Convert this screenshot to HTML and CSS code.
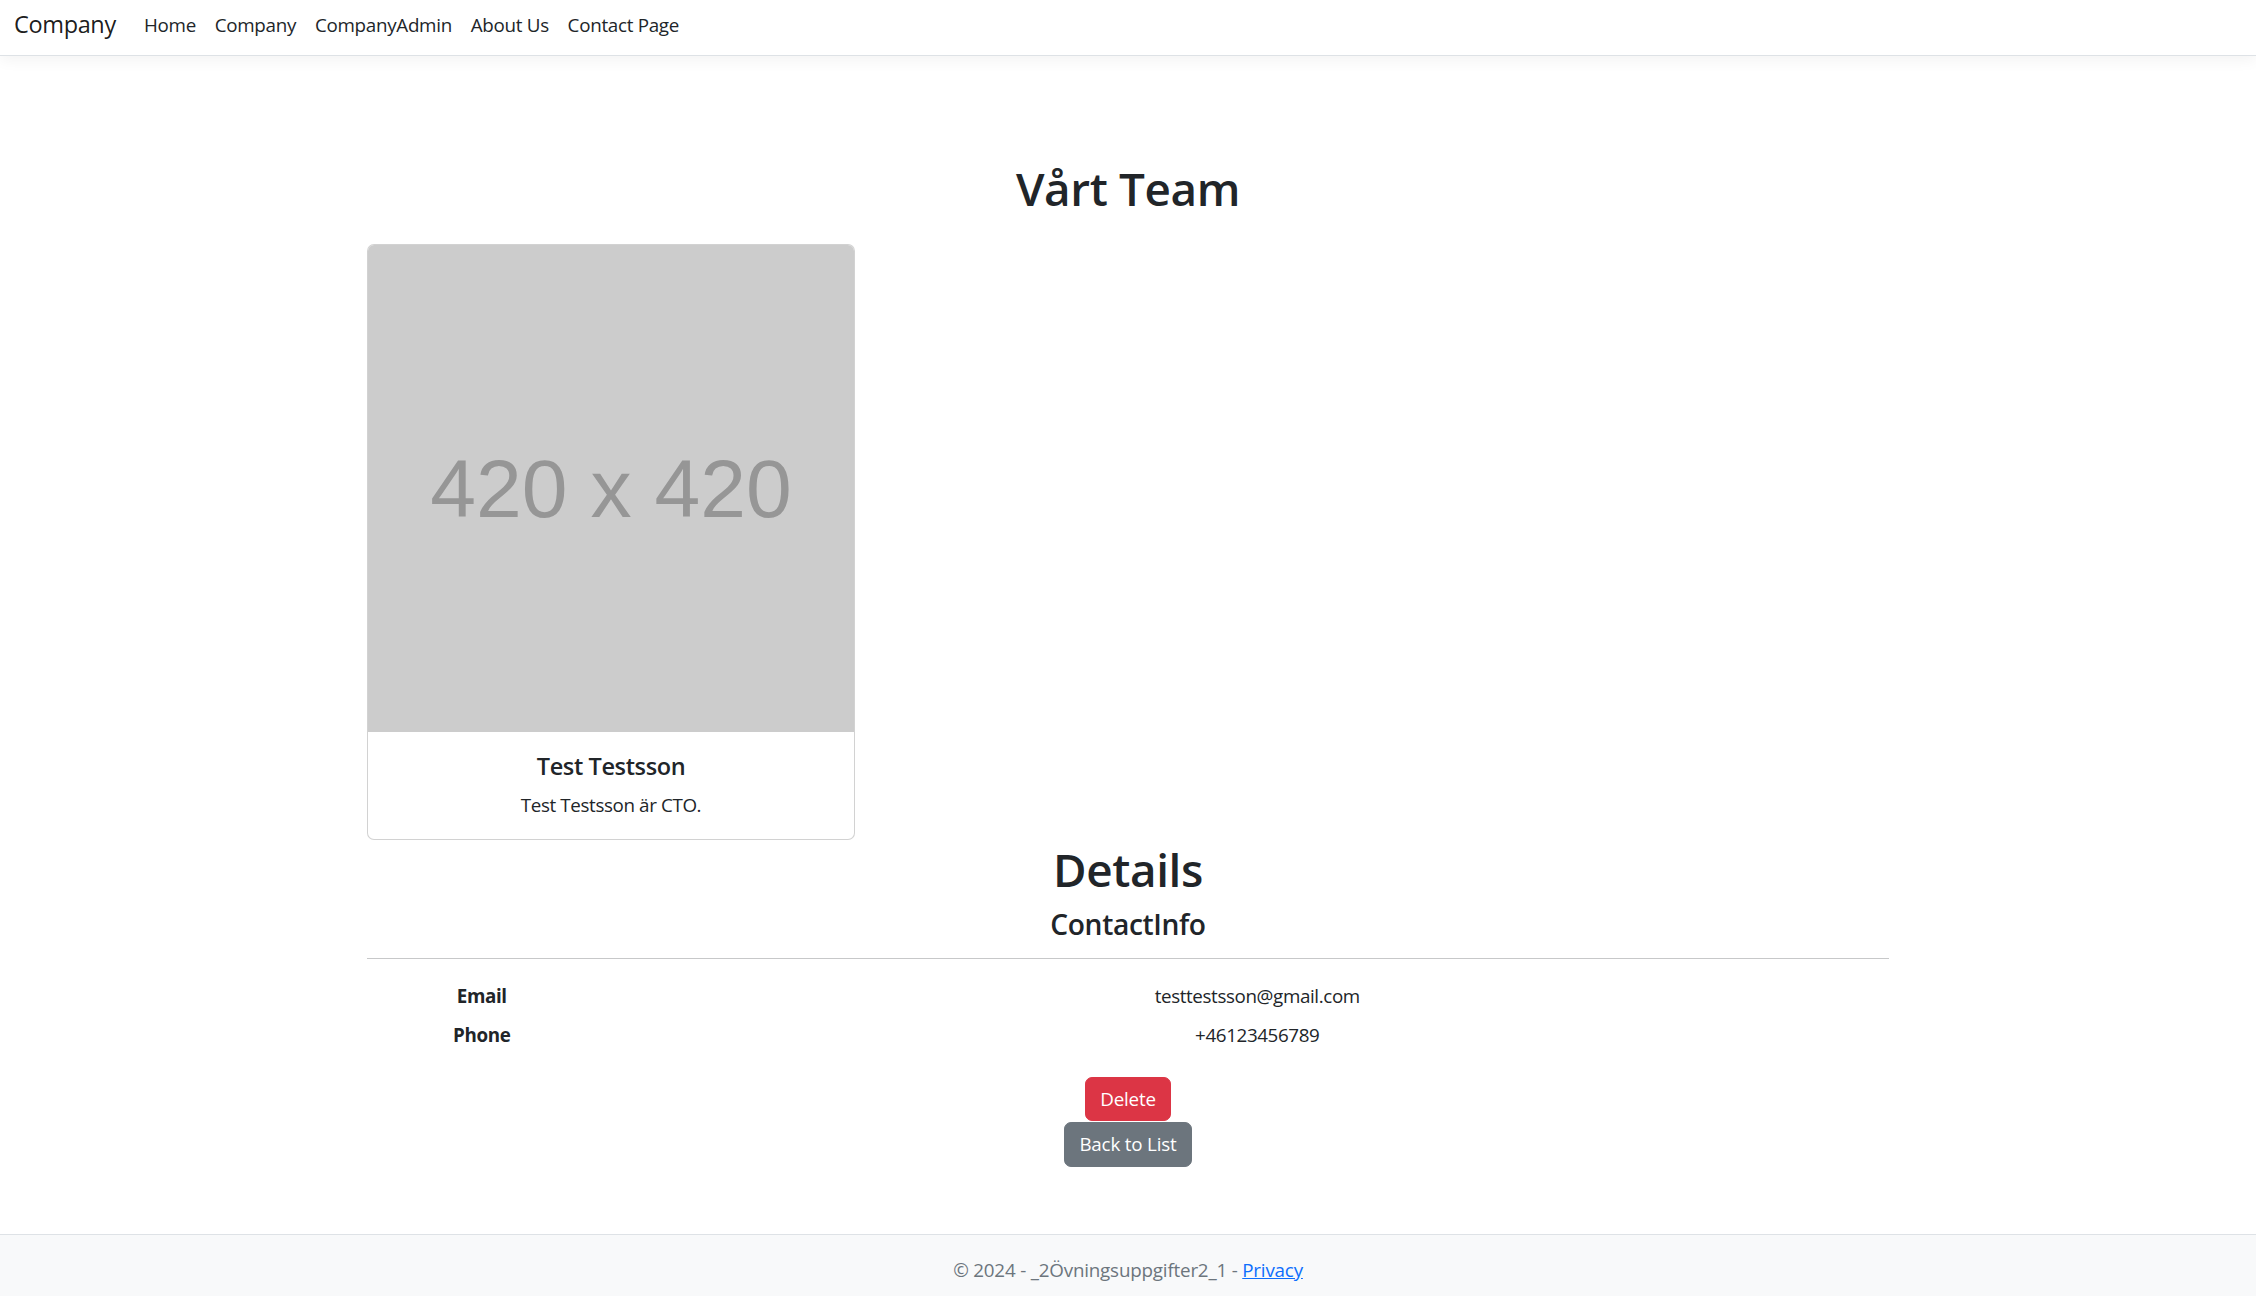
FILE: index.html
```html
<!DOCTYPE html>
<html lang="sv">
<head>
<meta charset="utf-8">
<title>Details - Company</title>
<link rel="stylesheet" href="styles.css">
</head>
<body>
<header>
  <nav class="navbar">
    <div class="navbar-inner">
      <a class="brand" href="#">Company</a>
      <ul class="nav-list">
        <li><a class="nav-link" href="#">Home</a></li>
        <li><a class="nav-link" href="#">Company</a></li>
        <li><a class="nav-link" href="#">CompanyAdmin</a></li>
        <li><a class="nav-link" href="#">About Us</a></li>
        <li><a class="nav-link" href="#">Contact Page</a></li>
      </ul>
    </div>
  </nav>
</header>
<main class="page">
  <h1 class="team-title">Vårt Team</h1>
  <div class="team-grid">
    <div class="member-card">
      <div class="placeholder"><span>420 x 420</span></div>
      <div class="card-body">
        <h5 class="card-title">Test Testsson</h5>
        <p class="card-text">Test Testsson är CTO.</p>
      </div>
    </div>
  </div>
  <h1 class="details-title">Details</h1>
  <h4 class="contact-title">ContactInfo</h4>
  <hr class="divider">
  <dl class="info">
    <dt>Email</dt>
    <dd>testtestsson@gmail.com</dd>
    <dt>Phone</dt>
    <dd>+46123456789</dd>
  </dl>
  <div class="actions">
    <button class="btn btn-danger" type="button">Delete</button>
    <a class="btn btn-secondary" href="#">Back to List</a>
  </div>
</main>
<footer class="footer">
  <div class="footer-inner">© 2024 - _2Övningsuppgifter2_1 - <a href="#">Privacy</a></div>
</footer>
</body>
</html>
```

FILE: styles.css
```css
html {
  zoom: 1.175;
}

* {
  box-sizing: border-box;
}

body {
  margin: 0;
  font-family: "Open Sans", "Noto Sans", "Liberation Sans", sans-serif;
  font-size: 16px;
  line-height: 1.5;
  letter-spacing: -0.02em;
  color: #212529;
  background: #fff;
  overflow: hidden;
}

a {
  text-decoration: none;
}

/* Navbar */
.navbar {
  height: 48px;
  border-bottom: 1px solid #dee2e6;
  background: #fff;
  box-shadow: 0 4px 12px rgba(0, 0, 0, 0.05);
}

.navbar-inner {
  height: 100%;
  display: flex;
  align-items: center;
  padding: 0 12px 5px;
}

.brand {
  font-size: 20px;
  color: rgba(0, 0, 0, 0.9);
  margin-right: 16px;
  line-height: 30px;
}

.nav-list {
  display: flex;
  list-style: none;
  margin: 0;
  padding: 0;
}

.nav-link {
  display: block;
  padding: 0 8px;
  color: #212529;
  line-height: 24px;
  letter-spacing: -0.015em;
}

/* Main */
.page {
  max-width: 1320px;
  margin: 0 auto;
  padding: 88px 12px 0;
  text-align: center;
}

.team-title,
.details-title {
  font-size: 39px;
  font-weight: 600;
  line-height: 48px;
  margin: 0 0 24px;
}

.details-title {
  margin: 1px 0 9px;
}

.team-grid {
  display: grid;
  grid-template-columns: repeat(3, 1fr);
  gap: 24px;
  text-align: left;
}

.member-card {
  border: 1px solid rgba(0, 0, 0, 0.175);
  border-radius: 6px;
  background: #fff;
  overflow: hidden;
}

.placeholder {
  aspect-ratio: 1 / 1;
  background: #cccccc;
  display: flex;
  align-items: center;
  justify-content: center;
}

.placeholder span {
  font-family: "Liberation Sans", Arial, sans-serif;
  font-size: 70px;
  letter-spacing: 0;
  color: #969696;
  line-height: 1;
}

.card-body {
  padding: 17px 16px 17px;
  text-align: center;
}

.card-title {
  font-size: 20px;
  font-weight: 600;
  line-height: 1.2;
  margin: 0 0 9px;
}

.card-text {
  margin: 0;
}

.contact-title {
  font-size: 24px;
  font-weight: 600;
  line-height: 1.2;
  margin: 0;
}

.divider {
  margin: 14px 0 19px;
  border: 0;
  border-top: 1px solid #212529;
  opacity: 0.25;
}

/* Definition list */
.info {
  display: grid;
  grid-template-columns: 220px 1fr;
  margin: 0 -12px;
}

.info dt {
  font-weight: 700;
  padding: 0 12px;
}

.info dd {
  margin: 0 0 9px;
  padding: 0 12px;
}

.actions {
  display: flex;
  flex-direction: column;
  align-items: center;
  margin-top: 15px;
}

.btn {
  display: inline-block;
  padding: 6px 12px;
  font-family: inherit;
  font-size: 16px;
  line-height: 1.5;
  letter-spacing: -0.01em;
  border: 1px solid transparent;
  border-radius: 6px;
  color: #fff;
  cursor: pointer;
}

.btn-danger {
  background: #dc3545;
  border-color: #dc3545;
}

.btn-secondary {
  background: #6c757d;
  border-color: #6c757d;
  margin-top: 1px;
}

/* Footer */
.footer {
  margin-top: 57px;
  height: 53px;
  border-top: 1px solid #dee2e6;
  background: #f8f9fa;
  color: #6c757d;
  overflow: hidden;
  text-align: center;
  letter-spacing: -0.01em;
}

.footer-inner {
  line-height: 60px;
  white-space: nowrap;
}

.footer a {
  color: #0d6efd;
  text-decoration: underline;
}
```
